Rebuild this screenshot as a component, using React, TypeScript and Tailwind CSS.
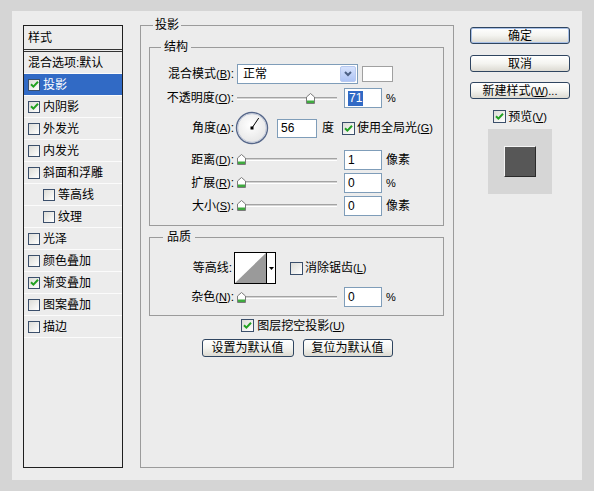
import React from 'react';

type Item = { label: string; checked?: boolean; selected?: boolean; indent?: boolean; noBox?: boolean };

const styleItems: Item[] = [
  { label: '混合选项:默认', noBox: true },
  { label: '投影', checked: true, selected: true },
  { label: '内阴影', checked: true },
  { label: '外发光' },
  { label: '内发光' },
  { label: '斜面和浮雕' },
  { label: '等高线', indent: true },
  { label: '纹理', indent: true },
  { label: '光泽' },
  { label: '颜色叠加' },
  { label: '渐变叠加', checked: true },
  { label: '图案叠加' },
  { label: '描边' },
];

function Check({ checked, small }: { checked?: boolean; small?: boolean }) {
  return (
    <span
      className={`inline-flex shrink-0 items-center justify-center border border-[#3b4f6b] bg-gradient-to-br from-[#dcdcd7] to-white ${
        small ? 'w-[12px] h-[12px]' : 'w-[13px] h-[13px]'
      }`}
    >
      {checked && (
        <svg width="9" height="9" viewBox="0 0 9 9">
          <path d="M1 4.2 L3.4 6.6 L8 1.8" fill="none" stroke="#21a121" strokeWidth="2" />
        </svg>
      )}
    </span>
  );
}

function Label({ text, k, w = 'w-[84px]' }: { text: string; k?: string; w?: string }) {
  return (
    <div className={`${w} shrink-0 text-right whitespace-nowrap`}>
      {text}
      {k && (
        <span className="text-[11px]">
          (<span className="underline">{k}</span>)
        </span>
      )}
      :
    </div>
  );
}

function Thumb() {
  return (
    <svg width="9" height="11" viewBox="0 0 9 11">
      <path d="M0.5 4 L4.5 0.5 L8.5 4 L8.5 10.5 L0.5 10.5 Z" fill="#fff" stroke="#7a7a7a" />
      <rect x="1" y="7.5" width="7" height="2.5" fill="#3faa3f" />
    </svg>
  );
}

function Slider({ pct }: { pct: number }) {
  return (
    <div className="relative ml-[3px] w-[100px] h-[11px] flex items-center">
      <div className="w-full h-[3px] bg-[#d4d4d4] border-t border-[#a3a3a3] border-b border-b-white" />
      <div className="absolute top-0" style={{ left: `${pct}%` }}>
        <Thumb />
      </div>
    </div>
  );
}

function NumBox({ value, w = 'w-[38px]', h = 'h-[20px]', selected }: { value: string; w?: string; h?: string; selected?: boolean }) {
  return (
    <div className={`${w} ${h} shrink-0 bg-white border border-[#7f9db9] flex items-center pl-[3px] text-[12px] font-['Liberation_Sans',sans-serif]`}>
      {selected ? <span className="bg-[#316ac5] text-white px-[1px] leading-[15px]">{value}</span> : value}
    </div>
  );
}

function Btn({ children, w = 'w-[100px]', h = 'h-[17px]', focus }: { children: React.ReactNode; w?: string; h?: string; focus?: boolean }) {
  return (
    <div
      className={`${w} ${h} shrink-0 rounded-[3px] border border-[#2f4560] bg-gradient-to-b from-white via-[#f4f4f0] to-[#dcdad2] flex items-center justify-center leading-none ${
        focus ? 'shadow-[inset_0_0_0_1px_#a8c0e6]' : ''
      }`}
    >
      {children}
    </div>
  );
}

function Dial() {
  const a = (56 * Math.PI) / 180;
  const cx = 17;
  const cy = 17;
  return (
    <svg width="34" height="34" viewBox="0 0 34 34">
      <defs>
        <radialGradient id="dg" cx="0.45" cy="0.4" r="0.6">
          <stop offset="0" stopColor="#ffffff" />
          <stop offset="1" stopColor="#e6e6e6" />
        </radialGradient>
      </defs>
      <circle cx={cx} cy={cy} r="15.5" fill="url(#dg)" stroke="#56678a" strokeWidth="1.4" />
      <circle cx={cx} cy={cy} r="14.3" fill="none" stroke="#b9c2d4" strokeWidth="0.8" />
      <line x1={cx} y1={cy} x2={cx + Math.cos(a) * 12} y2={cy - Math.sin(a) * 12} stroke="#000" strokeWidth="1" />
      <rect x={cx - 1.5} y={cy - 1.5} width="3" height="3" fill="#000" />
    </svg>
  );
}

function Contour() {
  return (
    <div className="ml-[2px] w-[42px] h-[32px] border border-black bg-white flex">
      <svg width="31" height="30" viewBox="0 0 31 30">
        <polygon points="0,30 31,0 31,30" fill="#9a9a9a" />
      </svg>
      <div className="flex-1 border-l border-black flex items-center justify-center">
        <svg width="5" height="3" viewBox="0 0 5 3">
          <polygon points="0,0 5,0 2.5,3" fill="#000" />
        </svg>
      </div>
    </div>
  );
}

export default function App() {
  return (
    <div className="w-[594px] h-[491px] bg-[#d5d5d5] pt-[11px] pl-[12px] text-[12px] text-black font-['Liberation_Sans','Noto_Sans_CJK_SC',sans-serif] leading-[14px]">
      <div className="w-[570px] h-[469px] bg-[#ececec] flex items-start pl-[11px] pt-[6px]">
        {/* style list */}
        <div className="mt-[8px] w-[100px] h-[443px] shrink-0 border border-[#1f1f1f] bg-[#ececec]">
          <div className="h-[26px] pl-[4px] flex items-center border-b-[3px] border-double border-[#333]">样式</div>
          {styleItems.map((it) => (
            <div
              key={it.label}
              className={`h-[22px] flex items-center gap-[3px] border-b border-[#fbfbfb] ${it.indent ? 'pl-[19px]' : 'pl-[4px]'} ${
                it.selected ? 'bg-[#316ac5] text-white' : ''
              }`}
            >
              {!it.noBox && <Check checked={it.checked} small />}
              <span className="whitespace-nowrap">{it.label}</span>
            </div>
          ))}
        </div>

        {/* main group */}
        <fieldset className="ml-[17px] w-[314px] h-[451px] shrink-0 border border-[#9b9b9b] px-[8px]">
          <legend className="ml-[4px] px-[2px] leading-[16px]">投影</legend>

          <fieldset className="mt-[6px] w-[295px] h-[187px] border border-[#9b9b9b]">
            <legend className="ml-[11px] px-[3px] leading-[16px]">结构</legend>

            <div className="mt-[9px] h-[20px] flex items-center">
              <Label text="混合模式" k="B" />
              <div className="ml-[3px] w-[121px] h-[20px] bg-white border border-[#7f9db9] flex items-center">
                <span className="pl-[5px] flex-1">正常</span>
                <div className="w-[16px] h-[16px] mr-[1px] rounded-[2px] bg-gradient-to-b from-[#d6e2fc] to-[#aec4f5] border border-[#b7c9f0] flex items-center justify-center">
                  <svg width="8" height="6" viewBox="0 0 8 6">
                    <path d="M1 1 L4 4 L7 1" fill="none" stroke="#4d6185" strokeWidth="2" />
                  </svg>
                </div>
              </div>
              <div className="ml-[4px] w-[31px] h-[16px] bg-white border border-[#a0a0a0]" />
            </div>

            <div className="mt-[4px] h-[20px] flex items-center">
              <Label text="不透明度" k="O" />
              <Slider pct={69} />
              <div className="ml-[7px]">
                <NumBox value="71" selected />
              </div>
              <span className="ml-[4px] text-[11px]">%</span>
            </div>

            <div className="h-[40px] flex items-center">
              <Label text="角度" k="A" />
              <div className="ml-[1px] flex items-center">
                <Dial />
              </div>
              <div className="ml-[8px]">
                <NumBox value="56" w="w-[40px]" h="h-[19px]" />
              </div>
              <span className="ml-[5px]">度</span>
              <div className="ml-[8px] flex items-center gap-[2px]">
                <Check checked />
                <span className="whitespace-nowrap">
                  使用全局光<span className="text-[11px]">(<span className="underline">G</span>)</span>
                </span>
              </div>
            </div>

            {[
              { t: '距离', k: 'D', v: '1', u: '像素' },
              { t: '扩展', k: 'R', v: '0', u: '%' },
              { t: '大小', k: 'S', v: '0', u: '像素' },
            ].map((r) => (
              <div key={r.t} className="h-[23px] flex items-center">
                <Label text={r.t} k={r.k} />
                <Slider pct={0} />
                <div className="ml-[7px]">
                  <NumBox value={r.v} />
                </div>
                <span className={`ml-[4px] ${r.u === '%' ? 'text-[11px]' : ''}`}>{r.u}</span>
              </div>
            ))}
          </fieldset>

          <fieldset className="mt-[3px] w-[295px] h-[87px] border border-[#9b9b9b]">
            <legend className="ml-[13px] px-[4px] leading-[16px]">品质</legend>
            <div className="mt-[7px] h-[32px] flex items-center">
              <Label text="等高线" w="w-[82px]" />
              <Contour />
              <div className="ml-[14px] flex items-center gap-[2px]">
                <Check />
                <span className="whitespace-nowrap">
                  消除锯齿<span className="text-[11px]">(<span className="underline">L</span>)</span>
                </span>
              </div>
            </div>
            <div className="mt-[3px] h-[20px] flex items-center">
              <Label text="杂色" k="N" />
              <Slider pct={0} />
              <div className="ml-[7px]">
                <NumBox value="0" />
              </div>
              <span className="ml-[4px] text-[11px]">%</span>
            </div>
          </fieldset>

          <div className="mt-[3px] h-[13px] flex items-center justify-center gap-[3px] pr-[8px]">
            <Check checked />
            <span className="whitespace-nowrap">
              图层挖空投影<span className="text-[11px]">(<span className="underline">U</span>)</span>
            </span>
          </div>
          <div className="mt-[7px] flex justify-center gap-[9px]">
            <Btn w="w-[92px]" h="h-[18px]">设置为默认值</Btn>
            <Btn w="w-[90px]" h="h-[18px]">复位为默认值</Btn>
          </div>
        </fieldset>

        {/* right column */}
        <div className="ml-[16px] mt-[10px] w-[100px] flex flex-col items-center">
          <Btn focus>确定</Btn>
          <div className="mt-[11px]">
            <Btn>取消</Btn>
          </div>
          <div className="mt-[10px]">
            <Btn>
              <span className="whitespace-nowrap">
                新建样式<span className="text-[11px]">(<span className="underline">W</span>)...</span>
              </span>
            </Btn>
          </div>
          <div className="mt-[11px] h-[13px] flex items-center gap-[2px]">
            <Check checked />
            <span className="whitespace-nowrap">
              预览<span className="text-[11px]">(<span className="underline">V</span>)</span>
            </span>
          </div>
          <div className="mt-[6px] w-[64px] h-[65px] bg-[#d6d6d6] flex items-center justify-center">
            <div className="w-[32px] h-[31px] bg-[#575757] border-l border-t border-[#f4f4f4] border-r border-b border-r-[#2a2a2a] border-b-[#2a2a2a]" />
          </div>
        </div>
      </div>
    </div>
  );
}
